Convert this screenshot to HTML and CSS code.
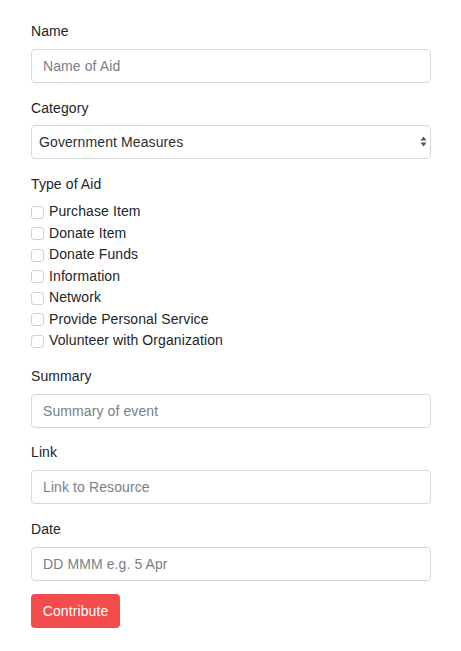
FILE: index.html
```html
<!DOCTYPE html>
<html>
<head>
<meta charset="utf-8">
<link rel="stylesheet" href="styles.css">
</head>
<body>
<form class="form">
  <div class="group">
    <label class="label">Name</label>
    <input class="control" type="text" placeholder="Name of Aid">
  </div>
  <div class="group">
    <label class="label">Category</label>
    <div class="select-wrap">
      <select class="control select">
        <option>Government Measures</option>
      </select>
      <span class="arrows"><svg width="7" height="11" viewBox="0 0 7 11"><path d="M3.5 0.5 L6.5 4.5 L0.5 4.5 Z" fill="#555"/><path d="M3.5 10.5 L6.5 6.5 L0.5 6.5 Z" fill="#555"/></svg></span>
    </div>
  </div>
  <div class="group">
    <label class="label">Type of Aid</label>
    <div class="checks">
      <label class="check"><input type="checkbox" class="box"><span>Purchase Item</span></label>
      <label class="check"><input type="checkbox" class="box"><span>Donate Item</span></label>
      <label class="check"><input type="checkbox" class="box"><span>Donate Funds</span></label>
      <label class="check"><input type="checkbox" class="box"><span>Information</span></label>
      <label class="check"><input type="checkbox" class="box"><span>Network</span></label>
      <label class="check"><input type="checkbox" class="box"><span>Provide Personal Service</span></label>
      <label class="check"><input type="checkbox" class="box"><span>Volunteer with Organization</span></label>
    </div>
  </div>
  <div class="group">
    <label class="label">Summary</label>
    <input class="control" type="text" placeholder="Summary of event">
  </div>
  <div class="group">
    <label class="label">Link</label>
    <input class="control" type="text" placeholder="Link to Resource">
  </div>
  <div class="group">
    <label class="label">Date</label>
    <input class="control" type="text" placeholder="DD MMM e.g. 5 Apr">
  </div>
  <button type="button" class="btn">Contribute</button>
</form>
</body>
</html>
```
FILE: styles.css
```css
html, body {
  margin: 0;
  padding: 0;
  background: #fff;
}
body {
  font-family: "Liberation Sans", Arial, Helvetica, sans-serif;
  font-size: 14px;
  letter-spacing: 0.1px;
  color: #212529;
}
.form {
  padding: 21px 0 0 31px;
  width: 400px;
}
.group {
  display: flex;
  flex-direction: column;
  margin-bottom: 14.5px;
}
.label {
  display: block;
  line-height: 21px;
  height: 21px;
  margin-bottom: 7px;
  color: #212529;
}
.control {
  box-sizing: border-box;
  width: 400px;
  height: 34px;
  margin: 0;
  padding: 0 11px;
  border: 1px solid #d6d9dc;
  border-radius: 4px;
  background: #fff;
  font-family: inherit;
  font-size: 14px;
  letter-spacing: 0.1px;
  color: #495057;
  outline: none;
}
.control::placeholder {
  color: #7a7f85;
}
.select-wrap {
  position: relative;
  width: 400px;
  margin-top: -0.5px;
}
.select {
  appearance: none;
  -webkit-appearance: none;
  padding: 0 7px;
  color: #2b2f33;
}
.arrows {
  position: absolute;
  right: 4px;
  top: 11px;
  width: 7px;
  height: 11px;
  display: block;
}
.arrows svg {
  display: block;
}
.checks {
  display: flex;
  flex-direction: column;
  margin-top: -0.3px;
}
.check {
  display: flex;
  align-items: center;
  height: 21.45px;
  line-height: 21px;
}
.box {
  appearance: none;
  -webkit-appearance: none;
  box-sizing: border-box;
  width: 13px;
  height: 13px;
  margin: 1px 5px 0 0;
  border: 1px solid #d0d3d6;
  border-radius: 3px;
  background: #fff;
}
.btn {
  box-sizing: border-box;
  width: 89px;
  height: 34px;
  margin-top: -1px;
  padding: 0;
  border: none;
  border-radius: 4px;
  background: #f44b4c;
  color: #fff;
  font-family: inherit;
  font-size: 14px;
  letter-spacing: 0.1px;
  cursor: pointer;
}
```
